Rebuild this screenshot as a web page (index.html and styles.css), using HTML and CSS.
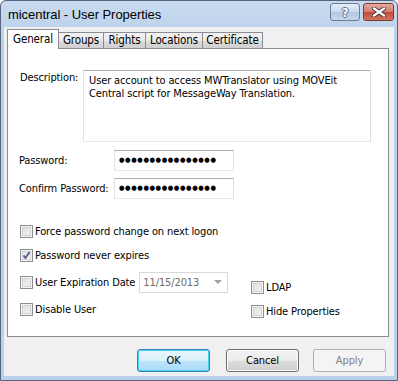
FILE: index.html
```html
<!DOCTYPE html>
<html>
<head>
<meta charset="utf-8">
<title>micentral - User Properties</title>
<link rel="stylesheet" href="styles.css">
</head>
<body>
<div class="window">
  <div class="titlebar">
    <span class="title">micentral - User Properties</span>
    <div class="caption">
      <div class="cbtn help"><span>?</span></div>
      <div class="cbtn close">
        <svg width="14" height="10" viewBox="0 0 14 10">
          <path d="M2 1.5 L12 8.5 M12 1.5 L2 8.5" stroke="#3a3a3a" stroke-width="4" stroke-linecap="square"/>
          <path d="M2 1.5 L12 8.5 M12 1.5 L2 8.5" stroke="#ffffff" stroke-width="2.2" stroke-linecap="square"/>
        </svg>
      </div>
    </div>
  </div>
  <div class="client">
    <div class="tabs">
      <div class="tab active t-general">General</div>
      <div class="tab t-groups">Groups</div>
      <div class="tab t-rights">Rights</div>
      <div class="tab t-locations">Locations</div>
      <div class="tab t-cert">Certificate</div>
    </div>
    <div class="panel">
      <div class="desc-row">
        <span class="lbl desc-lbl">Description:</span>
        <div class="textarea">User account to access MWTranslator using MOVEit<br>Central script for MessageWay Translation.</div>
      </div>
      <div class="field-row first">
        <span class="lbl pw-lbl">Password:</span>
        <div class="input">●●●●●●●●●●●●●●●●</div>
      </div>
      <div class="field-row second">
        <span class="lbl pw-lbl">Confirm Password:</span>
        <div class="input">●●●●●●●●●●●●●●●●</div>
      </div>
      <div class="checks">
        <div class="col-left">
          <div class="chk"><span class="box"></span><span>Force password change on next logon</span></div>
          <div class="chk"><span class="box checked"><svg width="9" height="9" viewBox="0 0 9 9"><path d="M1.5 4.5 L3.5 7 L7.5 1" fill="none" stroke="#4a5f8c" stroke-width="1.8"/></svg></span><span>Password never expires</span></div>
          <div class="chk tall"><span class="box"></span><span>User Expiration Date</span>
            <div class="combo"><span class="combo-text">11/15/2013</span><span class="arrow"></span></div>
          </div>
          <div class="chk"><span class="box"></span><span>Disable User</span></div>
        </div>
        <div class="col-right">
          <div class="chk"><span class="box"></span><span>LDAP</span></div>
          <div class="chk"><span class="box"></span><span>Hide Properties</span></div>
        </div>
      </div>
    </div>
    <div class="buttons">
      <div class="btn default">OK</div>
      <div class="btn cancel">Cancel</div>
      <div class="btn disabled">Apply</div>
    </div>
  </div>
</div>
</body>
</html>
```
FILE: styles.css
```css
* { box-sizing: border-box; }
html, body { margin: 0; padding: 0; background: #ffffff; }
body {
  font-family: "DejaVu Sans Condensed", "DejaVu Sans", sans-serif;
  font-stretch: condensed;
  font-size: 11px;
  letter-spacing: -0.12px;
  color: #000;
}
.window {
  width: 398px;
  height: 381px;
  border: 1px solid #55657c;
  border-radius: 6px 6px 0 0;
  background: linear-gradient(#c8daef, #b9d1ea 40px, #b9d1ea);
  padding: 0 3px 4px 3px;
  display: flex;
  flex-direction: column;
}
.titlebar {
  height: 26px;
  display: flex;
  align-items: center;
  justify-content: space-between;
  margin: 0 -3px;
  padding: 0 3px 0 7px;
}
.title {
  font-family: "Liberation Sans", sans-serif;
  font-size: 13px;
  letter-spacing: -0.05px;
  color: #000;
  margin-top: 1px;
}
.caption {
  display: flex;
  gap: 3px;
  align-self: flex-start;
  margin-top: 2px;
}
.cbtn {
  height: 18px;
  border: 1px solid #6b7c93;
  border-radius: 3px;
  display: flex;
  align-items: center;
  justify-content: center;
}
.help {
  width: 30px;
  background: linear-gradient(#e4edf8, #c9daee 50%, #b2c8e4 51%, #c3d6ec);
}
.help span {
  font-family: "DejaVu Sans", sans-serif;
  font-weight: bold;
  font-size: 13px;
  color: #ffffff;
  text-shadow: -1px 0 #5e6f86, 1px 0 #5e6f86, 0 -1px #5e6f86, 0 1px #5e6f86;
  line-height: 1;
}
.close {
  width: 31px;
  border-color: #7a3a36;
  background: linear-gradient(#e7a99e, #d47a6b 50%, #c24a3a 51%, #d3735f);
}
.client {
  flex: 1;
  background: #f0f0f0;
  padding: 2px 5px 4px 3px;
  display: flex;
  flex-direction: column;
}
.tabs {
  height: 19px;
  display: flex;
  align-items: flex-end;
  position: relative;
  z-index: 2;
}
.tab {
  height: 16px;
  border: 1px solid #898c95;
  border-bottom: none;
  border-left: none;
  background: linear-gradient(#f2f2f2, #ebebeb 50%, #dddddd 51%, #cfcfcf);
  line-height: 15px;
  text-align: center;
  font-size: 11.5px;
}
.tab.active {
  height: 20px;
  margin-bottom: -1px;
  background: #ffffff;
  border-left: 1px solid #898c95;
  line-height: 18px;
}
.t-general { width: 52px; }
.t-groups { width: 45px; }
.t-rights { width: 42px; }
.t-locations { width: 57px; }
.t-cert { width: 60px; }
.panel {
  height: 289px;
  width: 382px;
  border: 1px solid #898c95;
  background: #ffffff;
  padding: 21px 0 0 12px;
  display: flex;
  flex-direction: column;
}
.desc-row { display: flex; }
.desc-lbl { width: 63px; line-height: 13px; padding-top: 1px; }
.textarea {
  width: 288px;
  height: 72px;
  border: 1px solid #abadb3;
  border-color: #abadb3 #dbdfe6 #e3e9ef #e2e3ea;
  padding: 3px 5px;
  line-height: 13px;
}
.field-row { display: flex; align-items: center; }
.field-row.first { margin-top: 8px; }
.field-row.second { margin-top: 7px; }
.pw-lbl { width: 95px; margin-left: -1px; }
.input {
  width: 120px;
  height: 21px;
  border: 1px solid #abadb3;
  border-color: #abadb3 #dbdfe6 #e3e9ef #e2e3ea;
  font-family: "DejaVu Sans", sans-serif;
  font-size: 7px;
  letter-spacing: 0.6px;
  line-height: 19px;
  padding-left: 4px;
  white-space: nowrap;
  overflow: hidden;
}
.checks { display: flex; margin-top: 20px; }
.col-left { width: 231px; display: flex; flex-direction: column; }
.col-right { display: flex; flex-direction: column; padding-top: 56px; }
.chk { height: 24px; display: flex; align-items: center; }
.chk.tall { height: 30px; }
.box {
  width: 13px;
  height: 13px;
  border: 1px solid #8e8f8f;
  background: linear-gradient(135deg, #dcdcdc, #f6f6f6);
  box-shadow: inset 0 0 0 1px #f4f4f4, inset 0 0 0 2px #d2d2d2;
  margin-right: 2px;
  display: flex;
  align-items: center;
  justify-content: center;
  flex: none;
}
.box.checked { background: linear-gradient(135deg, #e0e0e0, #fafafa); }
.combo {
  width: 89px;
  height: 21px;
  border: 1px solid #d9d9d9;
  margin-left: 4px;
  display: flex;
  align-items: center;
  justify-content: space-between;
  padding: 0 5px 0 3px;
  background: #ffffff;
}
.combo-text { color: #6d6d6d; }
.arrow {
  width: 0; height: 0;
  border-left: 4px solid transparent;
  border-right: 4px solid transparent;
  border-top: 4px solid #a0a0a0;
}
.buttons {
  display: flex;
  justify-content: flex-end;
  margin-top: 12px;
  padding-right: 3px;
}
.btn {
  width: 73px;
  height: 23px;
  border: 1px solid #707070;
  border-radius: 3px;
  background: linear-gradient(#f2f2f2, #ebebeb 50%, #dddddd 51%, #cfcfcf);
  box-shadow: inset 0 0 0 1px #fcfcfc;
  display: flex;
  align-items: center;
  justify-content: center;
}
.btn.default {
  border-color: #3c7fb1;
  background: linear-gradient(#eaf6fd, #d9f0fc 50%, #bee6fd 51%, #a7d9f5);
  box-shadow: inset 0 0 0 1px #48d2f3;
}
.btn.cancel { margin-left: 16px; }
.btn.disabled {
  margin-left: 14px;
  border-color: #adb2b5;
  background: #f4f4f4;
  box-shadow: none;
  color: #838383;
}
```
